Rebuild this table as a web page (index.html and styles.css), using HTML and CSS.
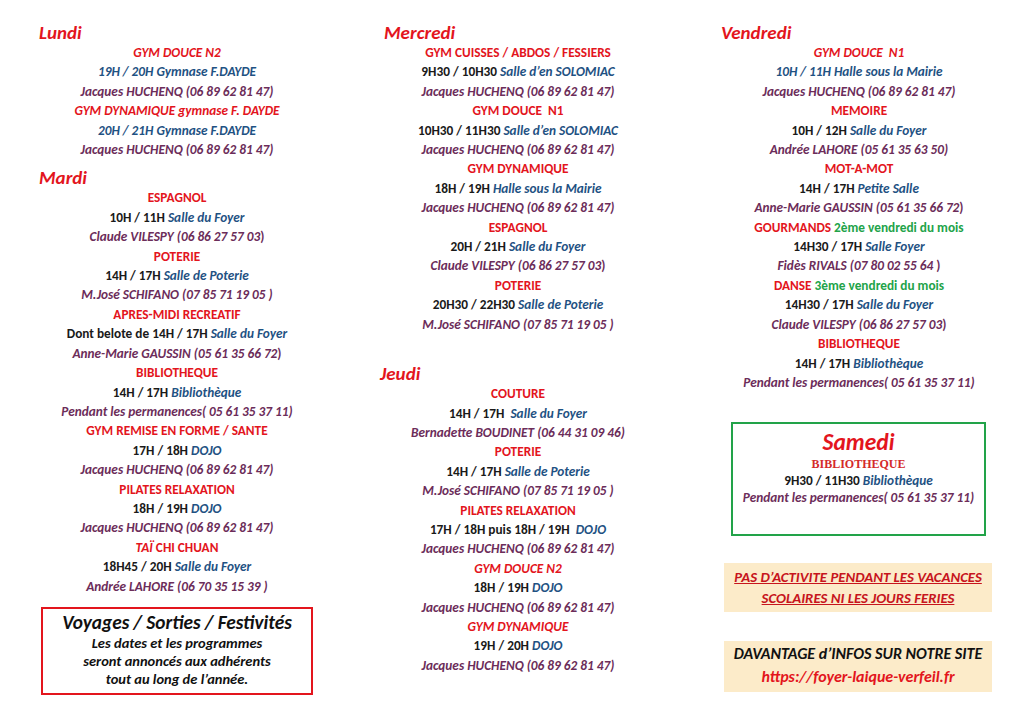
FILE: index.html
```html
<!DOCTYPE html>
<html lang="fr">
<head>
<meta charset="utf-8">
<link rel="stylesheet" href="styles.css">
</head>
<body>
<div class="page">
  <div class="col">
    <h2 class="day">Lundi</h2>
    <p class="act it">GYM DOUCE N2</p>
    <p class="place it strong">19H / 20H Gymnase F.DAYDE</p>
    <p class="who">Jacques HUCHENQ (06 89 62 81 47)</p>
    <p class="act it">GYM DYNAMIQUE gymnase F. DAYDE</p>
    <p class="place it strong">20H / 21H Gymnase F.DAYDE</p>
    <p class="who">Jacques HUCHENQ (06 89 62 81 47)</p>

    <h2 class="day day-tue">Mardi</h2>
    <p class="act">ESPAGNOL</p>
    <p class="time">10H / 11H <span class="place">Salle du Foyer</span></p>
    <p class="who">Claude VILESPY (06 86 27 57 03<span class="up">)</span></p>
    <p class="act">POTERIE</p>
    <p class="time">14H / 17H <span class="place">Salle de Poterie</span></p>
    <p class="who">M.José SCHIFANO (07 85 71 19 05 )</p>
    <p class="act">APRES-MIDI RECREATIF</p>
    <p class="time">Dont belote de 14H / 17H <span class="place">Salle du Foyer</span></p>
    <p class="who">Anne-Marie GAUSSIN (05 61 35 66 72<span class="up">)</span></p>
    <p class="act">BIBLIOTHEQUE</p>
    <p class="time">14H / 17H <span class="place">Bibliothèque</span></p>
    <p class="who">Pendant les permanences( 05 61 35 37 11)</p>
    <p class="act">GYM REMISE EN FORME / SANTE</p>
    <p class="time">17H / 18H <span class="place">DOJO</span></p>
    <p class="who">Jacques HUCHENQ (06 89 62 81 47)</p>
    <p class="act">PILATES RELAXATION</p>
    <p class="time">18H / 19H <span class="place">DOJO</span></p>
    <p class="who">Jacques HUCHENQ (06 89 62 81 47)</p>
    <p class="act"><span class="it">TAÏ</span> CHI CHUAN</p>
    <p class="time">18H45 / 20H <span class="place">Salle du Foyer</span></p>
    <p class="who">Andrée LAHORE (06 70 35 15 39 )</p>

    <div class="note-box">
      <p class="note-title">Voyages / Sorties / Festivités</p>
      <p class="note-line">Les dates et les programmes</p>
      <p class="note-line">seront annoncés aux adhérents</p>
      <p class="note-line">tout au long de l’année.</p>
    </div>
  </div>

  <div class="col">
    <h2 class="day day-wed">Mercredi</h2>
    <p class="act">GYM CUISSES / ABDOS / FESSIERS</p>
    <p class="time">9H30 / 10H30 <span class="place">Salle d’en SOLOMIAC</span></p>
    <p class="who">Jacques HUCHENQ (06 89 62 81 47)</p>
    <p class="act">GYM DOUCE &nbsp;N1</p>
    <p class="time">10H30 / 11H30 <span class="place">Salle d’en SOLOMIAC</span></p>
    <p class="who">Jacques HUCHENQ (06 89 62 81 47)</p>
    <p class="act">GYM DYNAMIQUE</p>
    <p class="time">18H / 19H <span class="place">Halle sous la Mairie</span></p>
    <p class="who">Jacques HUCHENQ (06 89 62 81 47)</p>
    <p class="act">ESPAGNOL</p>
    <p class="time">20H / 21H <span class="place">Salle du Foyer</span></p>
    <p class="who">Claude VILESPY (06 86 27 57 03<span class="up">)</span></p>
    <p class="act">POTERIE</p>
    <p class="time">20H30 / 22H30 <span class="place">Salle de Poterie</span></p>
    <p class="who">M.José SCHIFANO (07 85 71 19 05 )</p>

    <h2 class="day day-thu">Jeudi</h2>
    <p class="act">COUTURE</p>
    <p class="time">14H / 17H &nbsp;<span class="place">Salle du Foyer</span></p>
    <p class="who">Bernadette BOUDINET (06 44 31 09 46)</p>
    <p class="act">POTERIE</p>
    <p class="time">14H / 17H <span class="place">Salle de Poterie</span></p>
    <p class="who">M.José SCHIFANO (07 85 71 19 05 )</p>
    <p class="act">PILATES RELAXATION</p>
    <p class="time">17H / 18H puis 18H / 19H &nbsp;<span class="place">DOJO</span></p>
    <p class="who">Jacques HUCHENQ (06 89 62 81 47)</p>
    <p class="act it">GYM DOUCE N2</p>
    <p class="time">18H / 19H <span class="place">DOJO</span></p>
    <p class="who">Jacques HUCHENQ (06 89 62 81 47)</p>
    <p class="act it">GYM DYNAMIQUE</p>
    <p class="time">19H / 20H <span class="place">DOJO</span></p>
    <p class="who">Jacques HUCHENQ (06 89 62 81 47)</p>
  </div>

  <div class="col">
    <h2 class="day">Vendredi</h2>
    <p class="act it">GYM DOUCE &nbsp;N1</p>
    <p class="place it strong">10H / 11H Halle sous la Mairie</p>
    <p class="who">Jacques HUCHENQ (06 89 62 81 47)</p>
    <p class="act">MEMOIRE</p>
    <p class="time">10H / 12H <span class="place">Salle du Foyer</span></p>
    <p class="who">Andrée LAHORE (05 61 35 63 50)</p>
    <p class="act">MOT-A-MOT</p>
    <p class="time">14H / 17H <span class="place">Petite Salle</span></p>
    <p class="who">Anne-Marie GAUSSIN (05 61 35 66 72<span class="up">)</span></p>
    <p class="act">GOURMANDS <span class="green">2ème vendredi du mois</span></p>
    <p class="time">14H30 / 17H <span class="place">Salle Foyer</span></p>
    <p class="who">Fidès RIVALS (07 80 02 55 64 <span class="up">)</span></p>
    <p class="act">DANSE <span class="green">3ème vendredi du mois</span></p>
    <p class="time">14H30 / 17H <span class="place">Salle du Foyer</span></p>
    <p class="who">Claude VILESPY (06 86 27 57 03<span class="up">)</span></p>
    <p class="act">BIBLIOTHEQUE</p>
    <p class="time">14H / 17H <span class="place">Bibliothèque</span></p>
    <p class="who">Pendant les permanences( 05 61 35 37 11)</p>

    <div class="sat-box">
      <p class="sat-title">Samedi</p>
      <p class="sat-act">BIBLIOTHEQUE</p>
      <p class="time sat-time">9H30 / 11H30 <span class="place">Bibliothèque</span></p>
      <p class="who sat-who">Pendant les permanences( 05 61 35 37 11)</p>
    </div>

    <div class="info info-red">
      <p>PAS D’ACTIVITE PENDANT LES VACANCES</p>
      <p>SCOLAIRES NI LES JOURS FERIES</p>
    </div>

    <div class="info info-site">
      <p class="info-black">DAVANTAGE d’INFOS SUR NOTRE SITE</p>
      <p class="info-link">https://foyer-laique-verfeil.fr</p>
    </div>
  </div>
</div>
</body>
</html>
```

FILE: styles.css
```css
* { box-sizing: border-box; }

html, body {
  margin: 0;
  padding: 0;
  background: #ffffff;
}

body {
  font-family: "Carlito", "Open Sans", "Liberation Sans", sans-serif;
  font-weight: 700;
  font-size: 13.3px;
  color: #1a1a1a;
}

.page {
  width: 1024px;
  height: 724px;
  padding: 22px 0 0 12px;
  display: grid;
  grid-template-columns: 330px 330px 330px;
  column-gap: 11px;
  align-items: start;
}

.col {
  display: flex;
  flex-direction: column;
}

p { margin: 0; }

.day {
  margin: 0;
  padding-left: 27px;
  font-size: 19px;
  line-height: 21px;
  font-style: italic;
  font-weight: 700;
  color: #e3151d;
}
.day-tue { margin-top: 8px; }
.day-wed { padding-left: 31px; }
.day-thu { margin-top: 29px; }

.act, .time, .who, .col > .place {
  text-align: center;
  line-height: 19.4px;
  white-space: nowrap;
}

.act { color: #e3151d; }
.time { color: #1a1a1a; }
.place { color: #1f5283; font-style: italic; }
.who { color: #6c2d5a; font-style: italic; }
.it { font-style: italic; }
.up { font-style: normal; }
.green { color: #22a349; }

.note-box {
  margin: 11px 0 0 29px;
  width: 272px;
  height: 88px;
  border: 2px solid #e3151d;
  text-align: center;
  padding-top: 3px;
}
.note-title {
  font-size: 19.3px;
  line-height: 22px;
  font-style: italic;
  font-weight: 700;
  color: #111;
}
.note-line {
  font-size: 14.5px;
  font-style: italic;
  line-height: 18px;
  color: #111;
}

.sat-box {
  margin: 30px 0 0 37px;
  width: 255px;
  height: 114px;
  border: 2.5px solid #22a349;
  text-align: center;
  padding-top: 5px;
}
.sat-title {
  font-size: 23.5px;
  line-height: 26px;
  font-style: italic;
  color: #e3151d;
}
.sat-act {
  font-family: "Liberation Serif", "DejaVu Serif", serif;
  font-size: 12px;
  line-height: 18px;
  color: #d42a2a;
}
.sat-time { line-height: 16px; }
.sat-who { line-height: 18px; }

.info {
  background: #fcebc9;
  text-align: center;
  font-style: italic;
  width: 268px;
  margin-left: 30px;
}
.info-red {
  margin-top: 27px;
  height: 49px;
  padding-top: 4px;
  font-size: 14.8px;
  color: #c7151d;
  text-decoration: underline;
  line-height: 21px;
}
.info-site {
  margin-top: 29px;
  height: 51px;
  padding-top: 2px;
}
.info-black {
  color: #111;
  font-size: 16px;
  line-height: 22px;
}
.info-link {
  color: #e3151d;
  font-size: 16px;
  line-height: 24px;
}
```
